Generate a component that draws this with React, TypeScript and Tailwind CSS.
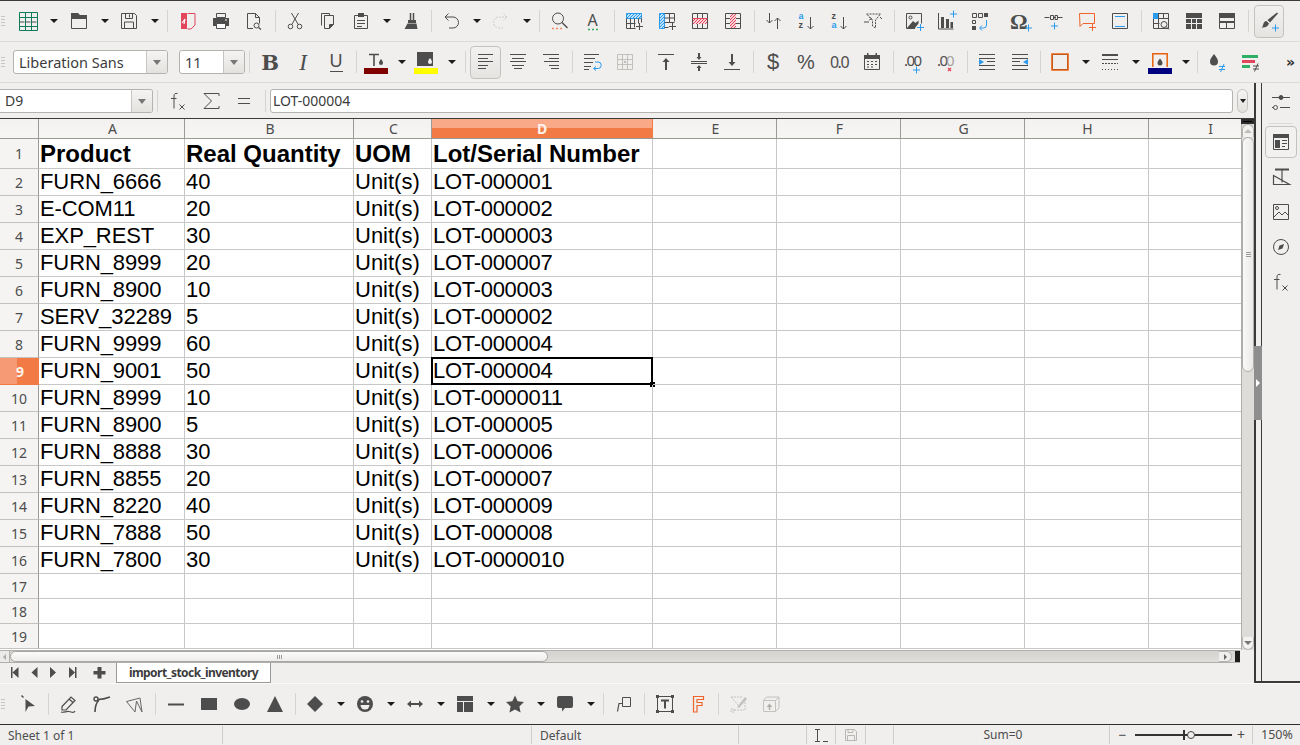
import React from 'react';

const G = '#4d4d4d';
const BL = '#2a9bec';
const RD = '#e2465c';
const OR = '#f0642a';

function Ic({ children, size = 24 }: { children?: React.ReactNode; size?: number }) {
  return (
    <svg width={size} height={size} viewBox="0 0 24 24" fill="none" stroke={G} strokeWidth={1} className="block shrink-0">
      {children}
    </svg>
  );
}
function Plus({ x, y, c = BL }: { x: number; y: number; c?: string }) {
  return <path d={`M${x - 3} ${y}h7M${x + 0.5} ${y - 3.5}v7`} stroke={c} />;
}
function Btn({ children }: { children?: React.ReactNode }) {
  return <div className="w-[33px] h-full shrink-0 pl-[4px] pr-[5px] flex items-center justify-center">{children}</div>;
}
function Dd({ w = 'w-[17px]' }: { w?: string }) {
  return (
    <div className={`${w} h-full shrink-0 flex items-center justify-center`}>
      <div className="w-0 h-0 border-l-[4px] border-r-[4px] border-t-[4px] border-l-transparent border-r-transparent border-t-[#1c1c1c]" />
    </div>
  );
}
function Sep({ w = 'w-[8px]' }: { w?: string }) {
  return (
    <div className={`${w} h-full shrink-0 flex items-center justify-center`}>
      <div className="w-px h-[22px] bg-[#d6d4d1]" />
    </div>
  );
}
function Grip({ w = 'w-[12px]' }: { w?: string }) {
  return (
    <div className={`${w} shrink-0 pl-px flex flex-col gap-[2px] items-start`}>
      <div className="w-[4px] h-px bg-[#c8c6c3]" />
      <div className="w-[4px] h-px bg-[#c8c6c3]" />
      <div className="w-[4px] h-px bg-[#c8c6c3]" />
      <div className="w-[4px] h-px bg-[#c8c6c3]" />
    </div>
  );
}
function GridBase({ c = G }: { c?: string }) {
  return <path d="M4.5 4.5h15v15h-15zM4.5 9.5h15M4.5 14.5h15M9.5 4.5v15M14.5 4.5v15" stroke={c} />;
}
const hatch = (x: number, y: number, w: number, h: number, c: string) => {
  const parts: string[] = [];
  for (let i = -h; i < w; i += 3) {
    const x1 = Math.max(x, x + i);
    const y1 = y + h - (x1 - (x + i));
    const x2 = Math.min(x + w, x + i + h);
    const y2 = y + h - (x2 - (x + i));
    parts.push(`M${x1} ${y1}L${x2} ${y2}`);
  }
  return <path d={parts.join('')} stroke={c} />;
};

const Toolbar1 = () => (
  <div className="h-[40px] flex items-center shrink-0">
    <Grip />
    <Btn>
      <Ic>
        <path d="M3.5 3.5h18v18h-18zM3.5 8.5h18M3.5 17.5h18M9.5 3.5v18M15.5 3.5v18" stroke="#0f7b5b" />
        <path d="M3.5 13h18" stroke={G} strokeDasharray="5 1" />
      </Ic>
    </Btn>
    <Dd w="w-[18px]" />
    <Btn>
      <Ic>
        <path d="M4.5 9.5h15v10h-15z" />
        <path d="M4 4h7l2 2h7v4H4z" fill={G} stroke="none" />
      </Ic>
    </Btn>
    <Dd />
    <Btn>
      <Ic>
        <path d="M4.5 4.5H17.5L19.5 6.5V19.5H4.5z" />
        <path d="M8.5 4.5v5h7v-5M7.5 19.5v-6.5h9v6.5M12.5 5.5v3" />
      </Ic>
    </Btn>
    <Dd />
    <Sep w="w-[9px]" />
    <Btn>
      <Ic>
        <path d="M5 4h6v16H5z" fill={RD} stroke="none" />
        <path d="M11.5 4.5h7.5V16l-4 4h-3.5" stroke={RD} />
        <path d="M6 14l3-4M9 10l-1 5" stroke="#fff" strokeWidth={1.2} />
      </Ic>
    </Btn>
    <Btn>
      <Ic>
        <path d="M7.5 4.5h9v4h-9z" />
        <path d="M4 9h16v8H4z" fill={G} stroke="none" />
        <path d="M7.5 14.5h9v5h-9z" fill="#fff" />
        <path d="M16 11h2" stroke="#fff" />
      </Ic>
    </Btn>
    <Btn>
      <Ic>
        <path d="M5.5 4.500h8l4 4v6M13.5 4.500v4h4M11 19.500H5.500v-15" />
        <circle cx="14.5" cy="16.5" r="2.5" />
        <path d="M16.5 18.5l2.500 2" strokeWidth={1.4} />
      </Ic>
    </Btn>
    <Sep />
    <Btn>
      <Ic>
        <circle cx="7.500" cy="17.500" r="2.300" />
        <circle cx="16.500" cy="17.500" r="2.300" />
        <path d="M8.800 15.500L15.500 4M15.200 15.500L8.500 4" />
      </Ic>
    </Btn>
    <Btn>
      <Ic>
        <path d="M5.500 16.500v-12h8v2" />
        <path d="M8.500 6.500h9v9l-4 4h-5zM13.500 19.500v-4h4" />
        <path d="M14 19l3.500-3.500h-3.500z" fill={G} stroke="none" />
      </Ic>
    </Btn>
    <Btn>
      <Ic>
        <path d="M5.500 6.500h13v13h-13z" />
        <path d="M9 4h6v4H9z" fill={G} stroke="none" />
        <path d="M8 11.500h8M8 14.500h8M8 17.500h5" />
      </Ic>
    </Btn>
    <Dd />
    <Btn>
      <Ic>
        <path d="M11.500 4v7M14.500 4v7" strokeWidth={1.5} />
        <path d="M9 11h8v3H9zM8.500 14.500h9l1 5.500H5.500z" fill={G} stroke="none" />
      </Ic>
    </Btn>
    <Sep w="w-[7px]" />
    <Btn>
      <Ic>
        <path d="M9.500 4.500L6 8l3.500 3.500M6 8h8a5.500 5.500 0 0 1 0 11h-4" />
      </Ic>
    </Btn>
    <Dd />
    <Btn>
      <Ic>
        <path d="M14.500 4.500L18 8l-3.500 3.500M18 8h-8a5.500 5.500 0 0 0 0 11h4" stroke="#cfcdca" strokeDasharray="2 1" />
      </Ic>
    </Btn>
    <Dd />
    <Sep w="w-[9px]" />
    <Btn>
      <Ic>
        <circle cx="10" cy="9.500" r="5.500" />
        <path d="M14 13.500l5.500 5.500" strokeWidth={1.4} />
        <path d="M4 19.500h10" stroke="#f28a63" strokeWidth={1.5} strokeDasharray="2 2" />
      </Ic>
    </Btn>
    <Btn>
      <Ic>
        <text x="6.500" y="17" fontSize="16" fill={G} stroke="none" fontFamily="'Noto Sans',sans-serif">A</text>
        <path d="M7 20.500h11" stroke="#2fae66" strokeWidth={1.6} strokeDasharray="2 2" />
      </Ic>
    </Btn>
    <Sep />
    <Btn>
      <Ic>
        <path d="M4 4h16v5H4z" fill="#bfe2fb" stroke="none" />
        {hatch(4, 4, 16, 5, BL)}
        <path d="M4.500 4.500h15v5h-15z" stroke={BL} />
        <path d="M4.500 9.500v10h9M4.500 14.500h9M8.500 9.500v10M12.500 9.500v9M16.500 9.500v5M19.500 9.500v4" />
        <Plus x={17} y={17.5} c={G} />
      </Ic>
    </Btn>
    <Btn>
      <Ic>
        <path d="M4 4h5v16H4z" fill="#bfe2fb" stroke="none" />
        {hatch(4, 4, 5, 16, BL)}
        <path d="M4.500 4.500h5v15h-5z" stroke={BL} />
        <path d="M9.500 4.500h10v8M9.500 9h10M9.500 13.500h10M14.500 4.500v9M9.500 18.500h4" />
        <Plus x={17} y={17.5} c={G} />
      </Ic>
    </Btn>
    <Btn>
      <Ic>
        <GridBase />
        <path d="M5 9h14v6H5z" fill="#fbd4da" stroke="none" />
        {hatch(5, 9, 14, 6, RD)}
        <path d="M4.500 9.500h15" stroke={RD} />
      </Ic>
    </Btn>
    <Btn>
      <Ic>
        <GridBase />
        <path d="M9 5h6v14H9z" fill="#fbd4da" stroke="none" />
        {hatch(9, 5, 6, 14, RD)}
      </Ic>
    </Btn>
    <Sep />
    <Btn>
      <Ic>
        <path d="M7.500 4v10M4.500 11l3 3 3-3M15.500 20V9M12.500 12l3-3 3 3" />
      </Ic>
    </Btn>
    <Btn>
      <Ic>
        <text x="3.500" y="10" fontSize="9" fontWeight="700" fill={BL} stroke="none" fontFamily="'Liberation Sans',sans-serif">a</text>
        <text x="3.500" y="19" fontSize="9" fontWeight="700" fill={G} stroke="none" fontFamily="'Liberation Sans',sans-serif">z</text>
        <path d="M15.500 8v12M12.500 17l3 3 3-3" />
      </Ic>
    </Btn>
    <Btn>
      <Ic>
        <text x="3.500" y="10" fontSize="9" fontWeight="700" fill={G} stroke="none" fontFamily="'Liberation Sans',sans-serif">z</text>
        <text x="3.500" y="19" fontSize="9" fontWeight="700" fill={BL} stroke="none" fontFamily="'Liberation Sans',sans-serif">a</text>
        <path d="M15.500 8v12M12.500 17l3 3 3-3" />
      </Ic>
    </Btn>
    <Btn>
      <Ic>
        <path d="M5.500 5h14l-5 6v8l-3-2v-6z" strokeDasharray="2 1" />
        <path d="M3 13h5M19 8l2 2" />
        <path d="M8 8l3 2-3 1" strokeWidth={0.8} />
      </Ic>
    </Btn>
    <Sep />
    <Btn>
      <Ic>
        <path d="M4.500 4.500h15v10M4.500 4.500v15H13" />
        <circle cx="8.500" cy="8.500" r="1.500" />
        <path d="M5 19l6-7 2.500 2 3-2.500v3L13 19z" fill={G} stroke="none" />
        <Plus x={18} y={18.5} />
      </Ic>
    </Btn>
    <Btn>
      <Ic>
        <path d="M3.500 4v16h15" />
        <path d="M6 8h3v11H6zM11 10h3v9h-3zM15.500 13h2.500v6h-2.500z" fill={G} stroke="none" />
        <Plus x={18} y={5} />
      </Ic>
    </Btn>
    <Btn>
      <Ic>
        <path d="M4.500 4.500h4v4h-4zM10.500 4.500h4v4h-4zM4.500 11.500h3v3h-3z" />
        <path d="M16 4h4v4h-4zM4 17h4v4H4z" fill={G} stroke="none" />
        <path d="M18.500 11v5a3 3 0 0 1-3 3H12M14 16.500L11.500 19l2.500 2.500" stroke={BL} />
      </Ic>
    </Btn>
    <div className="w-[8px] h-full shrink-0" />
    <Btn>
      <Ic>
        <text x="1" y="20" fontSize="22" fontWeight="700" fill={G} stroke="none" fontFamily="'Liberation Serif',serif">Ω</text>
        <Plus x={19} y={19} />
      </Ic>
    </Btn>
    <Btn>
      <Ic>
        <path d="M2.500 8.500h5M8.500 6.500h3v4h-3zM13 6.500h2.500v4H13zM15.500 8.500h5M11 8.500h3" />
        <Plus x={12} y={17} />
      </Ic>
    </Btn>
    <Btn>
      <Ic>
        <path d="M4.500 4.500h15v10H8l-3 3z" stroke={OR} />
        <Plus x={17} y={18.5} c={OR} />
      </Ic>
    </Btn>
    <Btn>
      <Ic>
        <path d="M4.500 4.500h15v15h-15z" />
        <path d="M7 7.500h10M7 17.500h10" stroke={BL} strokeWidth={1.2} />
      </Ic>
    </Btn>
    <Sep />
    <Btn>
      <Ic>
        <path d="M4.500 4.500h15v15h-15zM4.500 9.500h15M4.500 14.500h6M9.500 4.500v15M14.500 4.500v5" />
        <path d="M4 4h5v6H4z" fill={BL} stroke="none" />
        <circle cx="15" cy="15.500" r="3" fill="#f0efed" />
        <path d="M17 17.500l3 3" />
      </Ic>
    </Btn>
    <Btn>
      <Ic>
        <path d="M4 4h16v16H4z" fill={G} stroke="none" />
        <path d="M4 9.500h16M4 14.500h16M9.500 9v11M14.500 9v11" stroke="#f0efed" />
      </Ic>
    </Btn>
    <Btn>
      <Ic>
        <path d="M4.500 4.500h15v15h-15z" />
        <path d="M4 4h16v5H4z" fill={G} stroke="none" />
        <path d="M4.500 13.500h15M11.500 13.500v6" />
        <path d="M4 12h16v2H4z" fill={G} stroke="none" />
      </Ic>
    </Btn>
    <Sep />
    <div className="w-[30px] h-[33px] ml-[2px] shrink-0 rounded-[4px] border border-[#c4c2bf] bg-gradient-to-b from-[#f2f1f0] to-[#e6e4e1] flex items-center justify-center">
      <Ic>
        <path d="M20 3.500l1 1-8 9-2.500-2.500z" fill={G} stroke="none" />
        <path d="M9.500 12l2.500 2.500c-1 3-4 4.500-7.500 4 1.500-1 1.500-2.500 2-4 .5-1.500 1.500-2.500 3-2.500z" fill={G} stroke="none" />
        <Plus x={18} y={19} />
      </Ic>
    </div>
  </div>
);

const lines = (rows: [number, number, number][]) => rows.map(([x, y, w]) => `M${x} ${y}h${w}`).join('');

function Combo({ label, w, btn }: { label: string; w: string; btn: string }) {
  return (
    <div className={`${w} h-[24px] shrink-0 flex rounded-[3px] border border-[#b5b3b0] bg-white overflow-hidden`}>
      <div className="flex-1 pl-[5px] text-[14.5px] leading-[22px] text-[#3c3c3c] font-['Noto_Sans',sans-serif]">{label}</div>
      <div className={`${btn} border-l border-[#c8c6c3] bg-gradient-to-b from-[#f5f4f3] to-[#e4e2df] flex items-center justify-center`}>
        <div className="w-0 h-0 border-l-[4px] border-r-[4px] border-t-[5px] border-l-transparent border-r-transparent border-t-[#777]" />
      </div>
    </div>
  );
}

const Toolbar2 = () => (
  <div className="h-[40px] flex items-center shrink-0">
    <Grip w="w-[13px]" />
    <Combo label="Liberation Sans" w="w-[155px]" btn="w-[21px]" />
    <div className="w-[11px] shrink-0" />
    <Combo label="11" w="w-[66px]" btn="w-[21px]" />
    <Sep w="w-[9px]" />
    <Btn>
      <span className="font-['DejaVu_Serif',serif] font-bold text-[21px] leading-none text-[#4d4d4d]">B</span>
    </Btn>
    <Btn>
      <span className="font-['Liberation_Serif',serif] italic text-[23px] leading-none text-[#4d4d4d]">I</span>
    </Btn>
    <Btn>
      <div className="flex flex-col items-center">
        <span className="font-['Liberation_Sans',sans-serif] text-[18px] leading-[17px] text-[#4d4d4d]">U</span>
        <div className="w-[13px] h-[1px] bg-[#4d4d4d] mt-[1px]" />
      </div>
    </Btn>
    <Sep w="w-[7px]" />
    <Btn>
      <Ic>
        <path d="M5 4.500h10M10 4.500V16" strokeWidth={1.6} />
        <path d="M17 9c1.500 2 2 3 2 4a2 2 0 0 1-4 0c0-1 .5-2 2-4z" fill={G} stroke="none" />
        <path d="M0 18h24v6H0z" fill="#800000" stroke="none" />
      </Ic>
    </Btn>
    <Dd />
    <Btn>
      <Ic>
        <path d="M3 2h16v14H3z" fill={G} stroke="none" />
        <path d="M16 8c1.500 2 2 3 2 4a2 2 0 0 1-4 0c0-1 .5-2 2-4z" fill="#f0efed" stroke="none" />
        <path d="M0 18h24v6H0z" fill="#ffff00" stroke="none" />
      </Ic>
    </Btn>
    <Dd />
    <Sep w="w-[10px]" />
    <div className="w-[31px] h-[33px] mr-[1px] shrink-0 rounded-[4px] border border-[#c4c2bf] bg-gradient-to-b from-[#f2f1f0] to-[#e6e4e1] flex items-center justify-center">
      <Ic><path d={lines([[4, 4.5, 15], [4, 8.5, 10], [4, 11.5, 15], [4, 15.5, 10], [4, 18.5, 8]])} /></Ic>
    </div>
    <Btn>
      <Ic><path d={lines([[4, 4.5, 16], [6, 8.5, 12], [4, 11.5, 16], [6, 15.5, 12], [8, 18.5, 8]])} /></Ic>
    </Btn>
    <Btn>
      <Ic><path d={lines([[4, 4.5, 16], [10, 8.5, 10], [5, 11.5, 15], [10, 15.5, 10], [12, 18.5, 8]])} /></Ic>
    </Btn>
    <Sep />
    <Btn>
      <Ic>
        <path d={lines([[4, 4.5, 15], [4, 8.5, 11], [4, 12.5, 9], [4, 16.5, 7], [4, 19.5, 5]])} />
        <path d="M15 12h3a2.500 2.500 0 0 1 0 6.500h-4M16 16.500l-2.500 2 2.500 2" stroke={BL} />
      </Ic>
    </Btn>
    <Btn>
      <Ic>
        <path d="M4.500 4.500h15v15h-15zM4.500 9.500h15M4.500 14.500h15M9.500 4.500v15M14.500 4.500v15" stroke="#c2c0bd" />
        <path d="M11 12h2" stroke="#888" />
      </Ic>
    </Btn>
    <Sep />
    <Btn>
      <Ic>
        <path d="M4 4.500h16" />
        <path d="M12 8l-3.500 4H11v8h2v-8h2.500z" fill={G} stroke="none" />
      </Ic>
    </Btn>
    <Btn>
      <Ic>
        <path d="M4 11.500h16" />
        <path d="M4 13.500h16" />
        <path d="M12 10l-2.500-3H11V3h2v4h1.500zM12 15l-2.500 3H11v3h2v-3h1.500z" fill={G} stroke="none" />
      </Ic>
    </Btn>
    <Btn>
      <Ic>
        <path d="M4 19.500h16" />
        <path d="M12 16l-3.500-4H11V4h2v8h2.500z" fill={G} stroke="none" />
      </Ic>
    </Btn>
    <Sep />
    <Btn>
      <span className="font-['Liberation_Sans',sans-serif] text-[22px] leading-none text-[#4d4d4d]">$</span>
    </Btn>
    <Btn>
      <span className="font-['Liberation_Sans',sans-serif] text-[20px] leading-none text-[#4d4d4d]">%</span>
    </Btn>
    <Btn>
      <span className="font-['Noto_Sans',sans-serif] text-[16px] leading-none tracking-[-1.5px] text-[#4d4d4d]">0.0</span>
    </Btn>
    <Btn>
      <Ic>
        <path d="M4.500 6.500h15v13h-15z" />
        <path d="M4 5h16v4H4zM7 3h1.500v3H7zM15.500 3H17v3h-1.500z" fill={G} stroke="none" />
        <path d="M7 11.500h2M11 11.500h2M15 11.500h2M7 14.500h2M11 14.500h2M15 14.500h2M7 17h2M11 17h2" stroke={G} />
      </Ic>
    </Btn>
    <Sep />
    <Btn>
      <Ic>
        <text x="3" y="16" fontSize="15" letterSpacing="-1.5" fill={G} stroke="none" fontFamily="'Noto Sans',sans-serif">.00</text>
        <Plus x={15} y={20} />
      </Ic>
    </Btn>
    <Btn>
      <Ic>
        <text x="3" y="16" fontSize="15" letterSpacing="-1.5" fill={G} stroke="none" fontFamily="'Noto Sans',sans-serif">.0</text>
        <text x="12" y="16" fontSize="15" fill="#a5a3a0" stroke="none" fontFamily="'Noto Sans',sans-serif">0</text>
        <path d="M14 18l3 3M17 18l-3 3" stroke={RD} strokeWidth={1.3} />
      </Ic>
    </Btn>
    <Sep />
    <Btn>
      <Ic>
        <path d={lines([[4, 4.5, 16], [4, 19.5, 16], [4, 15.5, 16], [4, 8.5, 16], [12, 11.5, 8]])} />
        <path d="M4 9v6l5-3z" fill={BL} stroke="none" />
      </Ic>
    </Btn>
    <Btn>
      <Ic>
        <path d={lines([[4, 4.5, 16], [4, 19.5, 16], [4, 15.5, 16], [4, 8.5, 16], [4, 11.5, 8]])} />
        <path d="M20 9v6l-5-3z" fill={BL} stroke="none" />
      </Ic>
    </Btn>
    <Sep w="w-[7px]" />
    <Btn>
      <Ic>
        <path d="M4.500 4.500h15v15h-15z" fill="none" stroke={G} />
        <path d="M4 4h16v16H4z" stroke="#e8600e" strokeWidth={1.6} />
      </Ic>
    </Btn>
    <Dd />
    <Btn>
      <Ic>
        <path d="M4 4h16v2H4z" fill={G} stroke="none" />
        <path d="M4 9.500h16" />
        <path d="M4 13.500h16" strokeDasharray="2 1" />
        <path d="M4 19.500h16" strokeDasharray="1 2" />
      </Ic>
    </Btn>
    <Dd />
    <Btn>
      <Ic>
        <path d="M4.800 17V3.800h14.400V17" stroke="#e8600e" strokeWidth={1.5} />
        <path d="M12 8.500c1.500 2 2.500 3 2.500 4.500a2.500 2.500 0 0 1-5 0c0-1.500 1-2.500 2.500-4.500z" fill={G} stroke="none" />
        <path d="M0 18h24v6H0z" fill="#000080" stroke="none" />
      </Ic>
    </Btn>
    <Dd />
    <Sep w="w-[7px]" />
    <Btn>
      <Ic>
        <path d="M9 4c2.500 3.500 4 5 4 7.500a4 4 0 0 1-8 0C5 9 6.500 7.500 9 4z" fill={G} stroke="none" />
        <path d="M14 16.500h6M14 19.500h6M19 14l-3.500 8" stroke={BL} />
      </Ic>
    </Btn>
    <Btn>
      <Ic>
        <path d="M4 5h16v3H4zM4 15h8v3H4z" fill="#2fae66" stroke="none" />
        <path d="M4 10h13v3H4z" fill={RD} stroke="none" />
        <path d="M15 16h6M15 19h6M20 13.500l-3.500 8" />
      </Ic>
    </Btn>
    <div className="ml-[19px] font-['DejaVu_Sans',sans-serif] font-bold text-[14px] leading-none text-[#2c2c2c]">»</div>
  </div>
);

const FxIcon = () => (
  <Ic>
    <path d="M11.500 4.500c-2.500-.5-3.500.5-3.500 2.500V19.500M5 9.500h5.500" />
    <path d="M13.500 15.500l5 5M18.500 15.500l-5 5" />
  </Ic>
);

const FormulaBar = () => (
  <div className="h-[35px] flex items-center shrink-0 pt-[1px]">
    <div className="w-[153px] h-[24px] shrink-0 flex rounded-r-[3px] border border-l-0 border-[#b5b3b0] bg-white overflow-hidden">
      <div className="flex-1 pl-[5px] text-[14px] leading-[22px] text-[#3c3c3c] font-['Noto_Sans',sans-serif]">D9</div>
      <div className="w-[21px] border-l border-[#c8c6c3] bg-gradient-to-b from-[#f5f4f3] to-[#e4e2df] flex items-center justify-center">
        <div className="w-0 h-0 border-l-[4px] border-r-[4px] border-t-[5px] border-l-transparent border-r-transparent border-t-[#777]" />
      </div>
    </div>
    <div className="w-[9px] shrink-0 flex justify-center h-[22px]"><div className="w-px bg-[#d6d4d1]" /></div>
    <Btn><FxIcon /></Btn>
    <Btn>
      <Ic>
        <path d="M20 7V4.500H5L12.500 12 5 19.500h15V17" />
      </Ic>
    </Btn>
    <Btn>
      <Ic>
        <path d="M6 9.500h12M6 14.500h12" />
      </Ic>
    </Btn>
    <div className="w-[9px] shrink-0 flex justify-center h-[22px]"><div className="w-px bg-[#d6d4d1]" /></div>
    <div className="w-[963px] h-[24px] shrink-0 rounded-[3px] border border-[#b5b3b0] bg-white pl-[2px] text-[14px] leading-[22px] text-[#3c3c3c] font-['Noto_Sans',sans-serif]">
      LOT-000004
    </div>
    <div className="w-[11px] h-[24px] ml-[4px] shrink-0 rounded-full border border-[#c4c2bf] bg-gradient-to-b from-[#f5f4f3] to-[#e4e2df] flex items-center justify-center">
      <div className="w-0 h-0 border-l-[3px] border-r-[3px] border-t-[4px] border-l-transparent border-r-transparent border-t-[#222]" />
    </div>
  </div>
);

const colW = ['w-[146px]', 'w-[169px]', 'w-[78px]', 'w-[221px]', 'w-[124px]', 'w-[124px]', 'w-[124px]', 'w-[124px]', 'w-[93px]'];
const colT = ['tracking-[-0.1px]', '', '', 'tracking-[-0.3px]', '', '', '', '', ''];
const colN = ['A', 'B', 'C', 'D', 'E', 'F', 'G', 'H', 'I'];
const data: string[][] = [
  ['Product', 'Real Quantity', 'UOM', 'Lot/Serial Number'],
  ['FURN_6666', '40', 'Unit(s)', 'LOT-000001'],
  ['E-COM11', '20', 'Unit(s)', 'LOT-000002'],
  ['EXP_REST', '30', 'Unit(s)', 'LOT-000003'],
  ['FURN_8999', '20', 'Unit(s)', 'LOT-000007'],
  ['FURN_8900', '10', 'Unit(s)', 'LOT-000003'],
  ['SERV_32289', '5', 'Unit(s)', 'LOT-000002'],
  ['FURN_9999', '60', 'Unit(s)', 'LOT-000004'],
  ['FURN_9001', '50', 'Unit(s)', 'LOT-000004'],
  ['FURN_8999', '10', 'Unit(s)', 'LOT-0000011'],
  ['FURN_8900', '5', 'Unit(s)', 'LOT-000005'],
  ['FURN_8888', '30', 'Unit(s)', 'LOT-000006'],
  ['FURN_8855', '20', 'Unit(s)', 'LOT-000007'],
  ['FURN_8220', '40', 'Unit(s)', 'LOT-000009'],
  ['FURN_7888', '50', 'Unit(s)', 'LOT-000008'],
  ['FURN_7800', '30', 'Unit(s)', 'LOT-0000010'],
  [],
  [],
  [],
];

const Sheet = () => (
  <div className="flex-1 min-w-0 overflow-hidden bg-white flex flex-col">
    <div className="h-[20px] shrink-0 flex border-b border-[#9c9a97] bg-gradient-to-b from-[#f3f2f0] to-[#f6f5f4]">
      <div className="w-[39px] shrink-0 border-r border-[#9c9a97]" />
      {colN.map((c, i) =>
        c === 'D' ? (
          <div key={c} className={`${colW[i]} shrink-0 relative flex flex-col border-r border-[#f27a45]`}>
            <div className="h-[9px] bg-[#f9a888]" />
            <div className="h-[10px] bg-[#f27a45]" />
            <div className="absolute inset-0 flex items-center justify-center text-[14px] font-bold text-[#fdf3ec] font-['Noto_Sans',sans-serif]">D</div>
          </div>
        ) : (
          <div key={c} className={`${colW[i]} shrink-0 border-r border-[#9c9a97] flex items-center justify-center text-[14px] text-[#4d4d4d] font-['Noto_Sans',sans-serif] ${c === 'I' ? 'pl-[30px] border-r-0' : 'pl-[2px]'}`}>
            {c}
          </div>
        )
      )}
    </div>
    {data.map((row, r) => (
      <div key={r} className={`${r === 0 ? 'h-[30px]' : r >= 16 ? 'h-[25px]' : 'h-[27px]'} shrink-0 flex`}>
        {r === 8 ? (
          <div className="w-[39px] shrink-0 border-b border-[#f27a45] flex bg-[#f27a45] relative">
            <div className="w-[17px] bg-[#f59a74]" />
            <div className="absolute inset-0 pl-[1px] flex items-center justify-center text-[14px] font-bold text-[#fdf3ec] font-['Noto_Sans',sans-serif]">9</div>
          </div>
        ) : (
          <div className="w-[39px] shrink-0 border-r border-b border-r-[#9c9a97] border-b-[#c4c2bf] bg-[#f5f4f3] flex items-center justify-center text-[14px] text-[#4d4d4d] font-['Noto_Sans',sans-serif]">
            {r + 1}
          </div>
        )}
        {colW.map((w, c) => {
          const sel = r === 8 && c === 3;
          return (
            <div
              key={c}
              className={`${w} shrink-0 relative border-r border-b border-[#c8c8c8] flex items-end pl-px text-black whitespace-nowrap font-['Liberation_Sans',sans-serif] ${r === 0 ? 'font-bold text-[24px] leading-[28px]' : `text-[22px] leading-[25px] pb-px ${colT[c]}`} ${c === 8 ? 'border-r-0' : ''}`}
            >
              {row[c] ?? ''}
              {sel && (
                <>
                  <div className="absolute -left-px -top-px -right-px -bottom-px border-2 border-black" />
                  <div className="absolute -right-[3px] -bottom-[3px] w-[5px] h-[5px] bg-black" />
                </>
              )}
            </div>
          );
        })}
      </div>
    ))}
  </div>
);

const VScroll = () => (
  <div className="w-[13px] shrink-0 flex flex-col bg-[#dedcd9] border-l border-[#b0aeab]">
    <div className="h-[5px] bg-[#2e2e2e] -ml-px flex items-center justify-center">
      <div className="w-[9px] h-px bg-black" />
    </div>
    <div className="h-[13px] rounded-t-full bg-[#f3f2f1] border border-b-0 border-[#b5b3b0] flex items-center justify-center">
      <div className="w-0 h-0 border-l-[4px] border-r-[4px] border-b-[4px] border-l-transparent border-r-transparent border-b-[#c0bebb]" />
    </div>
    <div className="h-[235px] rounded-full bg-gradient-to-r from-[#f9f9f8] to-[#ebeae8] border border-[#b0aeab] flex flex-col gap-[1px] items-center justify-center">
      <div className="w-[5px] h-px bg-[#999]" />
      <div className="w-[5px] h-px bg-[#999]" />
      <div className="w-[5px] h-px bg-[#999]" />
    </div>
    <div className="flex-1" />
    <div className="h-[13px] rounded-b-full bg-[#f3f2f1] border border-t-0 border-[#b5b3b0] flex items-center justify-center">
      <div className="w-0 h-0 border-l-[4px] border-r-[4px] border-t-[4px] border-l-transparent border-r-transparent border-t-[#777]" />
    </div>
  </div>
);

const HScroll = () => (
  <div className="h-[13px] shrink-0 flex items-stretch bg-gradient-to-b from-[#d5d3d0] to-[#dfdddb] border-t border-b border-[#b0aeab]">
    <div className="w-[10px] shrink-0 flex items-center justify-center bg-[#eceae8] border-r border-[#b5b3b0]">
      <div className="w-0 h-0 border-t-[3px] border-b-[3px] border-r-[3px] border-t-transparent border-b-transparent border-r-[#aaa]" />
    </div>
    <div className="w-[538px] shrink-0 rounded-full bg-gradient-to-b from-[#fbfbfa] to-[#eeedeb] border border-[#a9a7a4] flex gap-[1px] items-center justify-center">
      <div className="w-px h-[4px] bg-[#999]" />
      <div className="w-px h-[4px] bg-[#999]" />
      <div className="w-px h-[4px] bg-[#999]" />
    </div>
    <div className="flex-1" />
    <div className="w-[13px] shrink-0 rounded-r-full bg-[#f0efed] border border-l-0 border-[#b5b3b0] flex items-center justify-center">
      <div className="w-0 h-0 border-t-[3px] border-b-[3px] border-l-[3px] border-t-transparent border-b-transparent border-l-[#666]" />
    </div>
    <div className="w-[3px] shrink-0" />
    <div className="w-[5px] shrink-0 bg-[#1c1c1c]" />
    <div className="w-[14px] shrink-0 bg-[#f0efed] -mb-px -mt-px" />
  </div>
);

const Tabs = () => (
  <div className="h-[20px] shrink-0 flex items-start">
    <svg width="116" height="20" viewBox="0 0 116 20" className="block shrink-0">
      <g fill={G}>
        <path d="M11 4h1.500v11H11zM18.500 4v11l-6-5.500zM37.500 4v11l-6-5.500zM50 4v11l6-5.500zM69 4v11l6-5.500zM75 4h1.500v11H75z" />
        <path d="M97.500 4h4v4h4v3.500h-4v4h-4v-4h-4V8h4z" />
      </g>
    </svg>
    <div className="w-[155px] h-[20px] shrink-0 bg-white border-l border-r border-b border-[#9c9a97] flex items-center justify-center text-[12px] tracking-[-0.55px] font-bold text-[#3c3c3c] font-['Noto_Sans',sans-serif]">
      import_stock_inventory
    </div>
  </div>
);

const Sidebar = () => (
  <div className="w-[46px] shrink-0 flex border-b-2 border-[#3a3a3a] h-[600px]">
    <div className="w-[8px] shrink-0 border-l-2 border-r border-[#3a3a3a] flex flex-col pt-[263px]">
      <div className="h-[74px] -ml-[2px] -mr-px bg-[#8e8e8e] flex items-center justify-center">
        <div className="w-0 h-0 border-t-[4px] border-b-[4px] border-l-[4px] border-t-transparent border-b-transparent border-l-white" />
      </div>
    </div>
    <div className="flex-1 flex flex-col items-center pt-[8px]">
      <div className="h-[24px] flex items-center justify-center">
        <Ic>
          <path d="M3 6.500h18M3 16.500h5M11 16.500h10" />
          <circle cx="12" cy="6.500" r="2" fill={G} />
          <circle cx="6.500" cy="16.500" r="2" fill="#f0efed" />
        </Ic>
      </div>
      <div className="w-[24px] h-px bg-[#dcdad7] mt-[8px] mb-[2px]" />
      <div className="w-[32px] h-[32px] shrink-0 rounded-[4px] border border-[#c4c2bf] bg-[#f2f1f0] flex items-center justify-center">
        <Ic>
          <path d="M4.500 4.500h15v15h-15z" />
          <path d="M4 4h16v4H4zM6 10h5v8H6z" fill={G} stroke="none" />
          <path d="M13 10.500h5M13 13.500h5M13 16.500h3" />
        </Ic>
      </div>
      <div className="h-[35px] mt-[1px] flex items-center justify-center">
        <Ic>
          <path d="M6 4.500h14" strokeWidth={2} />
          <path d="M13 4.500v13M4.500 19.500h16L4.500 10.500z" strokeWidth={1.2} />
        </Ic>
      </div>
      <div className="h-[35px] flex items-center justify-center">
        <Ic>
          <path d="M4.500 4.500h15v15h-15z" />
          <circle cx="8" cy="8" r="1.500" />
          <path d="M5 17l5-5 3 3 3-3 3 3" />
        </Ic>
      </div>
      <div className="h-[35px] flex items-center justify-center">
        <Ic>
          <circle cx="12" cy="12" r="7.500" />
          <path d="M15 9l-4.500 1.500L9 15l4.500-1.500z" fill={G} stroke="none" />
        </Ic>
      </div>
      <div className="h-[36px] flex items-center justify-center">
        <FxIcon />
      </div>
    </div>
  </div>
);

const DrawBar = () => (
  <div className="h-[41px] shrink-0 flex items-center border-t border-[#fbfafa] pb-px">
    <Grip />
    <Btn>
      <Ic>
        <path d="M9.500 7L19 14l-6.500.5L9.500 20z" fill={G} stroke="none" />
        <path d="M5.500 3.500l2 2" strokeWidth={1.4} />
      </Ic>
    </Btn>
    <Sep w="w-[7px]" />
    <Btn>
      <Ic>
        <path d="M6 14.500L15 5l4 3.500-9 9.500H6z" strokeWidth={1.2} />
        <path d="M13 7l4 3.500" strokeWidth={1.2} />
        <path d="M5 20c3 1 5-1 8-.5s5 2 6-.5" strokeWidth={1.2} />
      </Ic>
    </Btn>
    <Btn>
      <Ic>
        <circle cx="7" cy="7" r="2" strokeWidth={1.4} />
        <path d="M9 7.500c4 0 8-1 12-2.500M10 8c-3 3-4 7-4 12" strokeWidth={1.6} />
      </Ic>
    </Btn>
    <Btn>
      <Ic>
        <path d="M4.500 9.500L18 6l2 14-5.500-11-1.500 11z" stroke="#666" />
      </Ic>
    </Btn>
    <Sep w="w-[9px]" />
    <Btn><Ic><path d="M4 12.500h16" strokeWidth={2} /></Ic></Btn>
    <Btn><Ic><path d="M4 6h16v12H4z" fill={G} stroke="none" /></Ic></Btn>
    <Btn><Ic><ellipse cx="12" cy="12" rx="8" ry="6" fill={G} stroke="none" /></Ic></Btn>
    <Btn><Ic><path d="M12 4l8 16H4z" fill={G} stroke="none" /></Ic></Btn>
    <Sep w="w-[7px]" />
    <Btn><Ic><path d="M12 4l8 8-8 8-8-8z" fill={G} stroke="none" /></Ic></Btn>
    <Dd />
    <Btn>
      <Ic>
        <circle cx="12" cy="12" r="8" fill={G} stroke="none" />
        <circle cx="9" cy="9.500" r="1.300" fill="#f0efed" stroke="none" />
        <circle cx="15" cy="9.500" r="1.300" fill="#f0efed" stroke="none" />
        <path d="M7.500 13h9a4.500 4.500 0 0 1-9 0z" fill="#f0efed" stroke="none" />
      </Ic>
    </Btn>
    <Dd />
    <Btn><Ic><path d="M4 12l4-3.500v2.500h8V8.500l4 3.500-4 3.500V13H8v2.500z" fill={G} stroke="none" /></Ic></Btn>
    <Dd />
    <Btn><Ic><path d="M4 4h16v5H4zM4 10h6v10H4zM11 10h9v10h-9z" fill={G} stroke="none" /></Ic></Btn>
    <Dd />
    <Btn><Ic><path d="M12 3.500l2.700 5.800 6.300.8-4.600 4.300 1.200 6.200L12 17.500l-5.600 3.100 1.200-6.200L3 10.100l6.300-.8z" fill={G} stroke="none" /></Ic></Btn>
    <Dd />
    <Btn><Ic><path d="M6 4h12a2 2 0 0 1 2 2v8a2 2 0 0 1-2 2h-6l-3 3.500V16H6a2 2 0 0 1-2-2V6a2 2 0 0 1 2-2z" fill={G} stroke="none" /></Ic></Btn>
    <Dd />
    <Sep />
    <Btn>
      <Ic>
        <path d="M11.500 5.500h8v9h-8z" />
        <path d="M11 11.500H8L6.500 19.500" strokeWidth={1.2} />
      </Ic>
    </Btn>
    <Sep w="w-[9px]" />
    <Btn>
      <Ic>
        <path d="M4.500 4.500h15v15h-15z" />
        <path d="M8 8.500h8M12 8.500v8" strokeWidth={2} />
        <path d="M3 3h3v3H3zM18 3h3v3h-3zM3 18h3v3H3zM18 18h3v3h-3z" fill={G} stroke="none" />
      </Ic>
    </Btn>
    <Btn>
      <Ic>
        <path d="M7.500 20V4.500h10v3h-6.500v3h5v3h-5V20z" stroke={OR} strokeWidth={1.2} />
      </Ic>
    </Btn>
    <Sep w="w-[7px]" />
    <Btn>
      <Ic>
        <path d="M5 5h12M5 5l7 8M5 17h3v3H5zM8 18h10M19 10v8" stroke="#c4c2bf" strokeDasharray="2 1" />
        <path d="M11 15l8-10 2 2-8 9z" fill="#c4c2bf" stroke="none" />
      </Ic>
    </Btn>
    <Btn>
      <Ic>
        <path d="M4.500 8.500h12v11h-12zM4.500 8.500l3-3.500h12.500v11l-3.500 3.500M16.500 8.500L20 5" stroke="#c4c2bf" />
        <path d="M10.500 18v-5M8.500 15l2-2.500 2 2.500" stroke="#b0aeab" strokeWidth={1.4} />
      </Ic>
    </Btn>
  </div>
);

const Dv = ({ w }: { w: string }) => <div className={`${w} h-[18px] shrink-0 border-r border-[#cfcdca]`} />;

const StatusBar = () => (
  <div className="h-[21px] shrink-0 border-t border-[#2e2e2e] flex items-center text-[12px] text-[#4d4d4d] font-['Noto_Sans',sans-serif]">
    <div className="w-[223px] h-[18px] shrink-0 border-r border-[#cfcdca] pl-[8px] leading-[20px]">Sheet 1 of 1</div>
    <Dv w="w-[309px]" />
    <div className="w-[207px] h-[18px] shrink-0 border-r border-[#cfcdca] pl-[8px] leading-[20px]">Default</div>
    <Dv w="w-[68px]" />
    <div className="w-[29px] h-[18px] shrink-0 border-r border-[#cfcdca] flex items-center pl-[7px]">
      <svg width="16" height="16" viewBox="0 0 16 16" fill="none" stroke="#4d4d4d" className="block">
        <path d="M1 2.500h5M1 14.500h5M3.500 2.500v12M9 14.500h5" />
      </svg>
    </div>
    <div className="w-[30px] h-[18px] shrink-0 border-r border-[#cfcdca] flex items-center justify-center">
      <svg width="12" height="12" viewBox="0 0 12 12" fill="none" stroke="#b8b6b3" className="block">
        <path d="M.5.500h9l2 2v9H.5zM3 .5v3h5v-3M2.500 11.500v-5h7v5" />
      </svg>
    </div>
    <Dv w="w-[28px]" />
    <div className="w-[216px] h-[18px] shrink-0 border-r border-[#cfcdca] flex items-center justify-center pl-[3px] leading-none">Sum=0</div>
    <div className="w-[143px] h-[18px] shrink-0 border-r border-[#cfcdca] flex items-center">
      <div className="w-[25px] text-center text-[14px] leading-none">−</div>
      <div className="w-[97px] h-[2px] bg-[#333] relative">
        <div className="absolute left-[48px] -top-[4px] w-[2px] h-[10px] bg-[#333]" />
        <div className="absolute left-[52px] -top-[3px] w-[8px] h-[8px] rounded-full bg-[#f0efed] border border-[#444]" />
      </div>
      <div className="w-[18px] text-center text-[14px] leading-none">+</div>
    </div>
    <div className="flex-1 pl-[8px] text-[12.5px] leading-none">150%</div>
  </div>
);

export default function App() {
  return (
    <div className="w-[1300px] h-[745px] overflow-hidden bg-[#f0efed] flex flex-col">
      <div className="h-px shrink-0 bg-[#3c3b37]" />
      <Toolbar1 />
      <div className="h-px shrink-0 bg-[#dcdad7]" />
      <Toolbar2 />
      <div className="h-px shrink-0 bg-[#dcdad7]" />
      <div className="flex-1 min-h-0 flex">
        <div className="w-[1254px] shrink-0 flex flex-col">
          <FormulaBar />
          <div className="h-px shrink-0 bg-[#3c3b37]" />
          <div className="h-[531px] shrink-0 flex">
            <Sheet />
            <VScroll />
          </div>
          <HScroll />
          <Tabs />
        </div>
        <Sidebar />
      </div>
      <DrawBar />
      <StatusBar />
    </div>
  );
}
